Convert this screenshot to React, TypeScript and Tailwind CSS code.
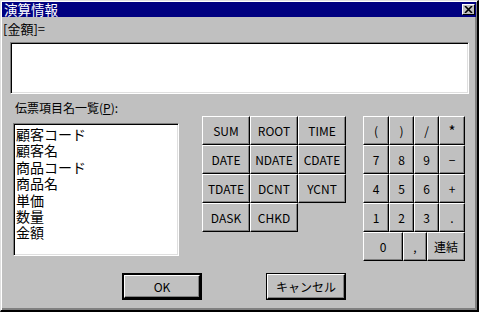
import React from "react";

const btn =
  "flex items-center justify-center bg-[#c0c0c0] border border-t-white border-l-white border-r-black border-b-black shadow-[inset_-1px_-1px_#808080] text-[12px] leading-none text-black";

function Btn({ label, w, big }: { label: string; w: number; big?: boolean }) {
  return (
    <div className={btn + " h-[29px]" + (big ? " text-[15px]" : "")} style={{ width: w }}>
      {label}
    </div>
  );
}

export default function App() {
  const funcs = [
    ["SUM", "ROOT", "TIME"],
    ["DATE", "NDATE", "CDATE"],
    ["TDATE", "DCNT", "YCNT"],
    ["DASK", "CHKD"],
  ];
  const keys = [
    ["(", ")", "/", "*"],
    ["7", "8", "9", "−"],
    ["4", "5", "6", "+"],
    ["1", "2", "3", "."],
  ];
  const kw = [26, 25, 25, 26];
  const items = ["顧客コード", "顧客名", "商品コード", "商品名", "単価", "数量", "金額"];

  return (
    <div className="w-[479px] h-[312px] bg-[#c0c0c0] border border-t-[#dfdfdf] border-l-[#dfdfdf] border-r-black border-b-black border-r-2 border-b-2 shadow-[inset_1px_1px_white,inset_-2px_-2px_#808080] font-['Noto_Sans_CJK_JP',sans-serif] text-black overflow-hidden flex flex-col">
      {/* title bar */}
      <div className="mx-[1px] mt-[1px] mr-[1px] h-[15px] bg-[#000080] flex items-center justify-between pl-[2px] pr-[1px]">
        <span className="text-white text-[13.5px] leading-[15px]">演算情報</span>
        <div className="w-[13px] h-[11px] bg-[#c0c0c0] border border-t-white border-l-white border-r-black border-b-black flex items-center justify-center">
          <svg width="9" height="7" viewBox="0 0 9 7">
            <path d="M1 0 L8 7 M8 0 L1 7" stroke="black" strokeWidth="1.6" />
          </svg>
        </div>
      </div>

      <div className="pl-[2px] mt-[5px] h-[14px] text-[13px] leading-[14px]">[金額]=</div>

      <div className="ml-[9px] mt-[6px] w-[459px] h-[52px] bg-white border border-t-[#808080] border-l-[#808080] border-r-white border-b-white shadow-[inset_1px_1px_black,inset_-1px_-1px_#dfdfdf]" />

      <div className="flex mt-[7px]">
        <div className="ml-[12px] w-[166px] flex flex-col">
          <div className="ml-[2px] h-[14px] text-[12px] leading-[14px]">
            伝票項目名一覧(<span className="underline">P</span>):
          </div>
          <div className="mt-[8px] h-[133px] bg-white border border-t-[#808080] border-l-[#808080] border-r-white border-b-white shadow-[inset_1px_1px_black,inset_-1px_-1px_#dfdfdf] pl-[2px] pt-[2px]">
            {items.map((t) => (
              <div key={t} className="text-[14px] leading-[16.4px] h-[16.4px]">
                {t}
              </div>
            ))}
          </div>
        </div>

        <div className="ml-[23px] mt-[15px] flex flex-col">
          {funcs.map((row, i) => (
            <div key={i} className="flex">
              {row.map((f) => (
                <Btn key={f} label={f} w={48} />
              ))}
            </div>
          ))}
        </div>

        <div className="ml-[17px] mt-[15px] flex flex-col">
          {keys.map((row, i) => (
            <div key={i} className="flex">
              {row.map((k, j) => (
                <Btn key={k} label={k} w={kw[j]} big={k === "*"} />
              ))}
            </div>
          ))}
          <div className="flex">
            <Btn label="0" w={40} />
            <Btn label="," w={24} />
            <Btn label="連結" w={38} />
          </div>
        </div>
      </div>

      <div className="flex mt-[12px] ml-[121px] gap-[64px]">
        <div className="w-[80px] h-[27px] border-2 border-black">
          <div className={btn + " w-full h-full"}>OK</div>
        </div>
        <div className="w-[80px] h-[27px] border border-black">
          <div className={btn + " w-full h-full"}>キャンセル</div>
        </div>
      </div>
    </div>
  );
}
